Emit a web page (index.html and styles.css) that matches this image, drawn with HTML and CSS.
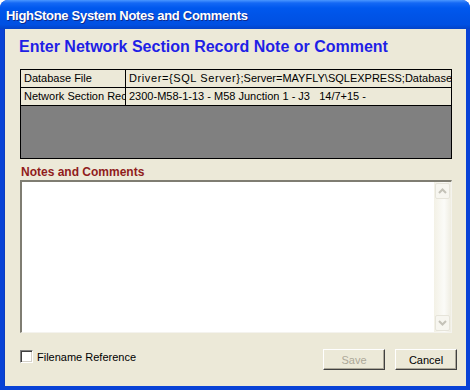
FILE: index.html
```html
<!DOCTYPE html>
<html lang="en">
<head>
    <meta charset="UTF-8">
    <title>HighStone System Notes and Comments</title>
    <link rel="stylesheet" href="styles.css">
</head>
<body>
<div class="window">
    <div class="titlebar">HighStone System Notes and Comments</div>
    <div class="client">
        <h1 class="heading">Enter Network Section Record Note or Comment</h1>
        <div class="grid">
            <div class="grid-row">
                <div class="cell cell-name">Database File</div>
                <div class="cell cell-value"><span class="spaced">Driver={SQL Server}</span>;Server=MAYFLY\SQLEXPRESS;Database=</div>
            </div>
            <div class="grid-row">
                <div class="cell cell-name">Network Section Rec</div>
                <div class="cell cell-value">2300-M58-1-13 - M58 Junction 1 - J3   14/7+15 -</div>
            </div>
            <div class="grid-empty"></div>
        </div>
        <div class="notes-label">Notes and Comments</div>
        <div class="notes">
            <div class="notes-text"></div>
            <div class="scrollbar">
                <div class="scroll-btn">
                    <svg width="9" height="6" viewBox="0 0 9 6"><path d="M1 5 L4.5 1.5 L8 5" fill="none" stroke="#c4c2b8" stroke-width="2"/></svg>
                </div>
                <div class="scroll-track"></div>
                <div class="scroll-btn">
                    <svg width="9" height="6" viewBox="0 0 9 6"><path d="M1 1 L4.5 4.5 L8 1" fill="none" stroke="#c4c2b8" stroke-width="2"/></svg>
                </div>
            </div>
        </div>
        <div class="footer">
            <label class="check">
                <span class="check-box"></span>
                Filename Reference
            </label>
            <div class="buttons">
                <button class="btn" disabled>Save</button>
                <button class="btn">Cancel</button>
            </div>
        </div>
    </div>
</div>
</body>
</html>
```

FILE: styles.css
```css
/*reset*/
body,h1,div,button{
    padding: 0;
    margin: 0;
}
body{
    font-family: "Liberation Sans", Arial, sans-serif;
    font-size: 11px;
    background: #ffffff;
}
/*window*/
.window{
    width: 470px;
    height: 390px;
    box-sizing: border-box;
    display: flex;
    flex-direction: column;
    background: #0842d6;
    border-radius: 8px 8px 0 0;
    overflow: hidden;
}
.titlebar{
    height: 29px;
    flex: none;
    box-sizing: border-box;
    padding: 8px 0 0 6px;
    color: #ffffff;
    font-size: 13px;
    font-weight: bold;
    letter-spacing: -0.3px;
    text-shadow: 1px 1px 0 #0f2a8c;
    background: linear-gradient(to bottom, #4a96ff 0, #1468f5 3px, #0058ee 8px, #0054e8 50%, #0050e2 85%, #0443c8 100%);
}
.client{
    flex: 1;
    margin: 0 4px 4px 4px;
    background: #ece9d8;
    padding: 7px 9px 0 15px;
    display: flex;
    flex-direction: column;
    border-left: 1px solid #0a3cc0;
}
.heading{
    font-size: 16px;
    line-height: 20px;
    font-weight: bold;
    color: #1f1fe6;
    margin: 1px 0 12px -1px;
}
/*grid*/
.grid{
    width: 432px;
    border: 1px solid #000000;
    box-sizing: border-box;
    background: #808080;
}
.grid-row{
    display: flex;
    height: 17px;
    border-bottom: 1px solid #000000;
    background: #ece9d8;
}
.cell{
    line-height: 16px;
    white-space: pre;
    overflow: hidden;
    padding-left: 3px;
}
.cell-name{
    width: 101px;
    flex: none;
    border-right: 1px solid #000000;
}
.cell-value{
    flex: 1;
}
.spaced{
    letter-spacing: 0.6px;
}
.grid-empty{
    height: 52px;
}
.notes-label{
    margin: 6px 0 0 1px;
    line-height: 14px;
    font-size: 12px;
    font-weight: bold;
    color: #901c1c;
}
/*notes box*/
.notes{
    width: 432px;
    height: 153px;
    margin-top: 1px;
    box-sizing: border-box;
    display: flex;
    background: #ffffff;
    border-top: 2px solid #7f7d72;
    border-left: 2px solid #7f7d72;
    border-right: 1px solid #f4f3ee;
    border-bottom: 1px solid #f4f3ee;
}
.notes-text{
    flex: 1;
}
.scrollbar{
    width: 17px;
    display: flex;
    flex-direction: column;
    background: linear-gradient(to right, #f3f1e6, #fbfbf8 60%, #efede2);
}
.scroll-btn{
    height: 16px;
    margin: 1px 1px 0 1px;
    box-sizing: border-box;
    border: 1px solid #e6e4da;
    border-radius: 2px;
    background: #f7f6f0;
    display: flex;
    align-items: center;
    justify-content: center;
}
.scroll-btn:last-child{
    margin: 0 1px 1px 1px;
}
.scroll-track{
    flex: 1;
}
/*footer*/
.footer{
    display: flex;
    justify-content: space-between;
    align-items: center;
    margin-top: 16px;
}
.check{
    display: flex;
    align-items: center;
    gap: 4px;
    margin-top: -6px;
    font-size: 11px;
}
.check-box{
    width: 13px;
    height: 13px;
    box-sizing: border-box;
    background: #ffffff;
    border-top: 1px solid #808080;
    border-left: 1px solid #808080;
    border-right: 1px solid #ffffff;
    border-bottom: 1px solid #ffffff;
    box-shadow: inset 1px 1px 0 #404040, inset -1px -1px 0 #d4d0c8;
}
.buttons{
    display: flex;
    gap: 10px;
}
.btn{
    width: 62px;
    height: 21px;
    font-family: "Liberation Sans", Arial, sans-serif;
    font-size: 11px;
    color: #000000;
    background: #ece9d8;
    border-top: 1px solid #ffffff;
    border-left: 1px solid #ffffff;
    border-right: 1px solid #404040;
    border-bottom: 1px solid #404040;
    box-shadow: inset -1px -1px 0 #aca899;
}
.btn:disabled{
    color: #aca899;
}
```
